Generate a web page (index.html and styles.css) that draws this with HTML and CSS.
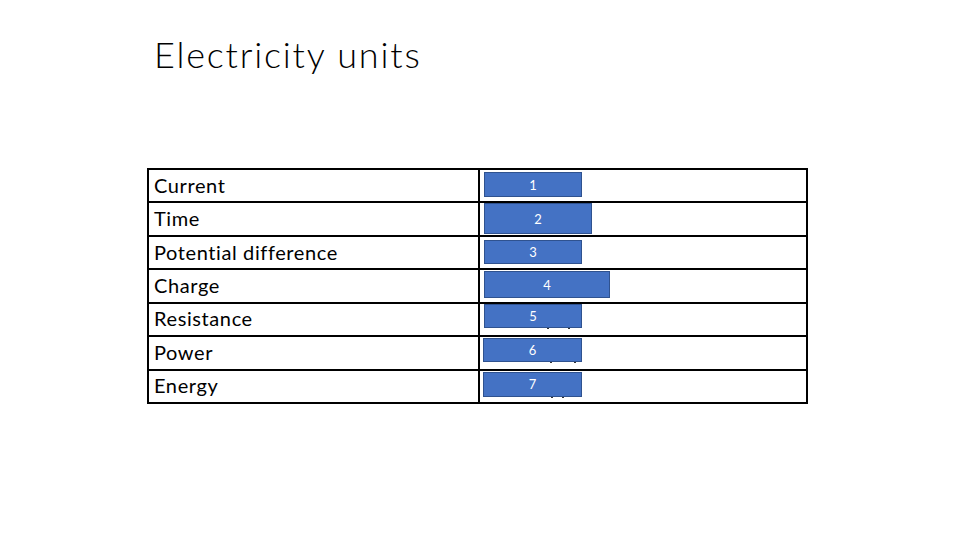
FILE: index.html
```html
<!DOCTYPE html>
<html>
<head>
<meta charset="utf-8">
<link rel="stylesheet" href="styles.css">
</head>
<body>
<div class="slide">
  <h1 class="title">Electricity units</h1>
  <div class="table">
    <div class="row"><div class="qty">Current</div><div class="unit"><div class="box b1">1</div></div></div>
    <div class="row"><div class="qty">Time</div><div class="unit"><div class="box b2">2</div></div></div>
    <div class="row"><div class="qty">Potential difference</div><div class="unit"><div class="box b3">3</div></div></div>
    <div class="row"><div class="qty">Charge</div><div class="unit"><div class="box b4">4</div></div></div>
    <div class="row"><div class="qty">Resistance</div><div class="unit"><div class="box b5">5</div><i class="mark m5a"></i><i class="mark m5b"></i></div></div>
    <div class="row"><div class="qty">Power</div><div class="unit"><div class="box b6">6</div><i class="mark m6a"></i><i class="mark m6b"></i></div></div>
    <div class="row"><div class="qty">Energy</div><div class="unit"><div class="box b7">7</div><i class="mark m7a"></i><i class="mark m7b"></i></div></div>
  </div>
</div>
</body>
</html>
```
FILE: styles.css
```css
html, body {
  margin: 0;
  padding: 0;
  background: #fff;
}
.slide {
  width: 960px;
  height: 540px;
  position: relative;
  overflow: hidden;
  font-family: Lato, "Open Sans", sans-serif;
  color: #000;
  font-variant-ligatures: none;
}
.title {
  margin: 0;
  padding: 30px 0 0 154px;
  font-weight: 300;
  font-size: 36px;
  letter-spacing: 1.8px;
  line-height: 48px;
  height: 168px;
  box-sizing: border-box;
}
.table {
  margin-left: 147px;
  width: 661px;
  border-top: 2px solid #000;
  border-left: 2px solid #000;
  box-sizing: border-box;
}
.row {
  display: grid;
  grid-template-columns: 331px 1fr;
  height: 33.43px;
  box-sizing: border-box;
  border-bottom: 2px solid #000;
}
.qty, .unit {
  border-right: 2px solid #000;
  display: flex;
  align-items: center;
  font-size: 20px;
  letter-spacing: 0.6px;
  padding-left: 5px;
  padding-bottom: 2px;
}
.unit {
  position: relative;
}
.box {
  position: absolute;
  left: 4px;
  background: #4472c4;
  border: 1.5px solid #2f528f;
  box-sizing: border-box;
  color: #fff;
  font-size: 13px;
  letter-spacing: 0;
  display: flex;
  align-items: center;
  justify-content: center;
}
.b1 { top: 2px; width: 98px; height: 25px; }
.b2 { top: 0px; width: 108px; height: 31px; }
.b3 { top: 3px; width: 98px; height: 24px; }
.b4 { top: 1px; width: 126px; height: 27px; }
.b5 { top: 0px; width: 98px; height: 24px; }
.b6 { top: 1px; left: 3px; width: 99px; height: 24px; }
.b7 { top: 1px; left: 3px; width: 99px; height: 25px; }
.mark {
  position: absolute;
  width: 2px;
  height: 1px;
  background: #333;
}
.m5a { left: 67px; top: 24px; }
.m5b { left: 88px; top: 24px; }
.m6a { left: 70px; top: 25px; }
.m6b { left: 94px; top: 25px; }
.m7a { left: 71px; top: 26px; }
.m7b { left: 82px; top: 26px; }
```
